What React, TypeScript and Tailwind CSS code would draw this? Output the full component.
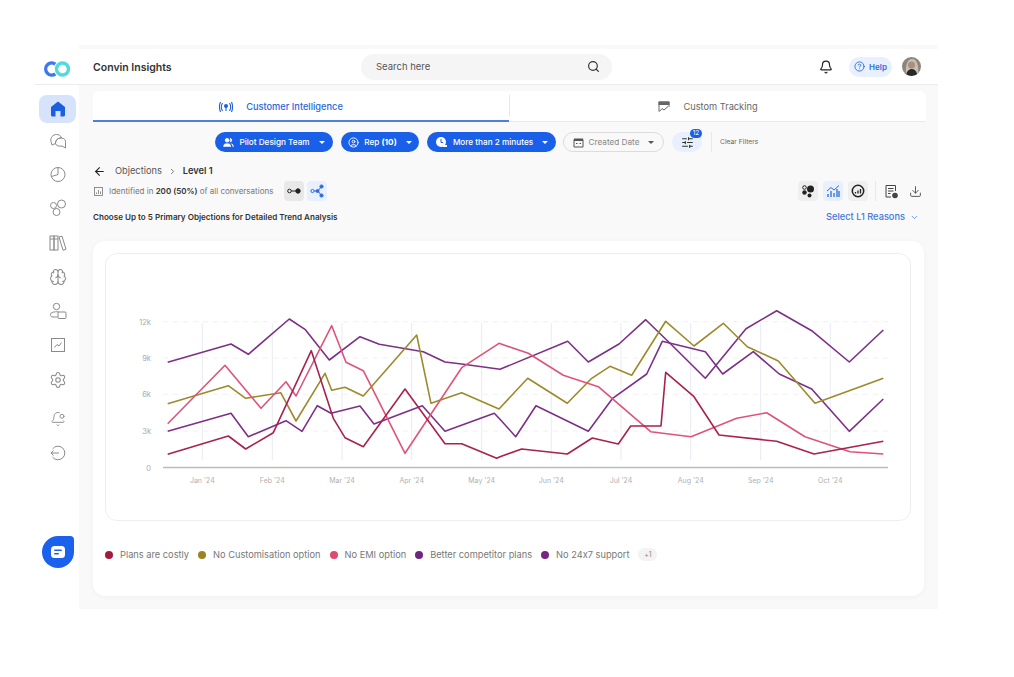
import React from 'react';
import { Bell, Brain, ChevronDown, ChevronRight, ArrowLeft, CircleHelp, Search, Settings, BellDot, Download, Users, CircleUser, SlidersHorizontal } from 'lucide-react';

const FONT = 'font-["Inter",sans-serif]';

const series = [
  { color: '#7c3086', pts: '167.7,362.3 231,344 248.3,354.3 289.3,319 305,329.3 329.3,360 360,336.7 379.3,344.3 423.3,351.7 445,362 461.7,364 500,369.3 567.7,341.3 588.3,362 619,344 645.7,319.7 670,343.3 705.3,378.3 746,328.7 776.7,310.7 811.7,330.7 849.3,362 883.3,330' },
  { color: '#7c3086', pts: '167.7,431.3 231,413.3 248.3,436.7 286,420.7 302,431.3 317.3,405.7 331,413.3 360,406 374,424 422.3,405.7 445,431.3 494.3,413.3 500,419.3 515.7,436.7 536,405.7 588.3,431.3 612.3,398.7 646.7,374 662.3,341.3 705.3,351.7 722.7,374 753.3,351.7 779.3,374 811.7,389 849.3,431.3 883.3,399' },
  { color: '#9c8a2c', pts: '167.7,403.7 228.3,385.7 245.7,398.3 280.7,392.7 296,421 325,373.3 331.7,390.3 345,387.3 363.3,396 416.7,335 431,403.3 461.7,392.7 499,409 527.7,378.3 567.3,403.3 591.7,378.3 610,366.3 631.7,375.3 665.7,321.3 694,346 723.3,323.3 747.3,346.7 778.3,361 815,403.3 883.3,378.3' },
  { color: '#de5479', pts: '167.7,423.7 225,365.3 261,408.3 286,381.7 296,396 331.7,325.7 346,362.3 363.3,370.7 405,453.3 461.7,367.7 499,343.3 528.3,353.3 563.3,375.3 598.3,386.7 650.7,431.7 691,436.7 736.7,418.3 766.7,412.7 805,436.7 850,451.7 883.3,454' },
  { color: '#a8224e', pts: '167.7,454.3 228.3,436 245.7,449 273.3,432.7 311.3,350.7 333.3,418.3 345,437.7 363.3,446.7 405,389 445,443.7 461.7,443.7 496.7,458.3 500,456.7 521.7,449 567.3,454 592.3,438 618.3,444 630.7,426 661,426 665.7,372.3 694,396.7 719,435 776.7,441.3 814,454 883.3,441.3' },
];

const yTicks = [
  { label: '12k', y: 321.7 },
  { label: '9k', y: 358 },
  { label: '6k', y: 394.3 },
  { label: '3k', y: 431 },
];

const months = [
  { label: "Jan '24", x: 202.3 },
  { label: "Feb '24", x: 272.3 },
  { label: "Mar '24", x: 342 },
  { label: "Apr '24", x: 411.7 },
  { label: "May '24", x: 481.7 },
  { label: "Jun '24", x: 551.3 },
  { label: "Jul '24", x: 621 },
  { label: "Aug '24", x: 690.7 },
  { label: "Sep '24", x: 760.7 },
  { label: "Oct '24", x: 830.3 },
];

const legend = [
  { label: 'Plans are costly', dot: 'bg-[#a5183f]' },
  { label: 'No Customisation option', dot: 'bg-[#9a8420]' },
  { label: 'No EMI option', dot: 'bg-[#e04a70]' },
  { label: 'Better competitor plans', dot: 'bg-[#6f2480]' },
  { label: 'No 24x7 support', dot: 'bg-[#7a2482]' },
];

const Logo = () => (
  <svg width="27" height="16" viewBox="0 0 27 16">
    <path d="M11.3 3.2A6 6 0 1 0 11.3 12.8" fill="none" stroke="#3f78ee" strokeWidth="3.4" />
    <circle cx="18.5" cy="8" r="6" fill="none" stroke="#4fdadb" strokeWidth="3.4" />
  </svg>
);

const HomeIcon = () => (
  <svg width="18" height="18" viewBox="0 0 18 18">
    <path fillRule="evenodd" d="M9 1.5 16 7v8a1.5 1.5 0 0 1-1.5 1.5h-11A1.5 1.5 0 0 1 2 15V7ZM6.5 11v5.5h5V11Z" fill="#1a5fe0" />
  </svg>
);

const ChatsIcon = () => (
  <svg width="18" height="18" viewBox="0 0 18 18" fill="none" stroke="#8a8a8a" strokeWidth="1">
    <path d="M2 9.5C1 5.5 4 2.5 7.500 2.500 10 2.500 12 3.800 12.500 6 9 5.800 6.500 8 6.500 11.500L3 13Z" />
    <path d="M6.500 11.500C6.500 8 9 5.800 12.500 6 15 6.200 17 8 16.500 10.500L16.500 16 13 14C10 14.500 7 14 6.500 11.500Z" />
  </svg>
);

const PieIcon = () => (
  <svg width="18" height="18" viewBox="0 0 18 18" fill="none" stroke="#8a8a8a" strokeWidth="1">
    <circle cx="9" cy="9.500" r="7" />
    <path d="M9 2.500V9.500L2.500 11.500" />
  </svg>
);

const BubblesIcon = () => (
  <svg width="18" height="18" viewBox="0 0 18 18" fill="none" stroke="#8a8a8a" strokeWidth="1">
    <circle cx="4.500" cy="6.500" r="3" />
    <circle cx="12.500" cy="5" r="4" />
    <circle cx="7.500" cy="13" r="3.500" />
  </svg>
);

const BooksIcon = () => (
  <svg width="18" height="18" viewBox="0 0 18 18" fill="none" stroke="#8a8a8a" strokeWidth="1">
    <rect x="1" y="2" width="4" height="14" />
    <rect x="5" y="2" width="4" height="14" />
    <path d="M1 5H9M10 3l3-.8 4 13-3 1Z" />
  </svg>
);

const PersonCaseIcon = () => (
  <svg width="18" height="18" viewBox="0 0 18 18" fill="none" stroke="#8a8a8a" strokeWidth="1">
    <circle cx="7.500" cy="4.500" r="3.200" />
    <path d="M8.500 15H4C1 15 .6 11.500 3 10.500 5 9.800 8 9.500 10 10" />
    <rect x="9" y="10" width="8" height="6.500" rx="1" />
  </svg>
);

const TrendBoxIcon = () => (
  <svg width="16" height="16" viewBox="0 0 16 16" fill="none" stroke="#8a8a8a" strokeWidth="1">
    <rect x="1.500" y="1.500" width="13" height="13" />
    <path d="M4.500 10.500 7 7.500 9 9 11.500 5.500" />
  </svg>
);

const ExitIcon = () => (
  <svg width="18" height="18" viewBox="0 0 18 18" fill="none" stroke="#8a8a8a" strokeWidth="1">
    <path d="M3.500 5A6.800 6.800 0 1 1 3.500 13" />
    <path d="M10 9H2M4.500 6.500 2 9l2.500 2.500" />
  </svg>
);

const ChatButton = () => (
  <div className="flex h-8 w-8 items-center justify-center rounded-[50%_12%_50%_50%] bg-[#1a62ee]">
    <svg width="16" height="14" viewBox="0 0 16 14">
      <rect x="1" y="1" width="14" height="12" rx="3.500" fill="#fff" />
      <rect x="4" y="4.500" width="8" height="1.600" rx=".8" fill="#1a62ee" />
      <rect x="4" y="8" width="5" height="1.600" rx=".8" fill="#1a62ee" />
    </svg>
  </div>
);

const Avatar = () => (
  <svg width="19" height="19" viewBox="0 0 19 19" className="rounded-full">
    <rect width="19" height="19" fill="#8d857c" />
    <path d="M4 19C3 9 5 2 10 2s7 6 6 17Z" fill="#c9bfb2" />
    <circle cx="9.500" cy="8" r="3.500" fill="#a98f7d" />
    <path d="M4 19c.5-5 3-7 6-7s5 3 5.500 7Z" fill="#26282b" />
  </svg>
);

const BroadcastIcon = () => (
  <svg width="14" height="14" viewBox="0 0 14 14" fill="none" stroke="#1d5fe0" strokeWidth="1.100">
    <path d="M3.500 3C2 5.500 2 8.500 3.500 11M10.500 3C12 5.500 12 8.500 10.500 11" />
    <path d="M1.500 2C.2 5 .2 9 1.500 12M12.500 2C13.800 5 13.800 9 12.500 12" />
    <circle cx="7" cy="6" r="2" fill="#1d5fe0" stroke="none" />
    <path d="M7 7v4" />
  </svg>
);

const CustomTrackIcon = () => (
  <svg width="12" height="12" viewBox="0 0 12 12" fill="none" stroke="#666" strokeWidth="1">
    <path d="M1 10.500V1h10v5" />
    <rect x="1" y="1" width="10" height="2.500" fill="#666" />
    <path d="M1.500 10.500 4 7.500 6 9l4-3.500" />
  </svg>
);

const ClockPersonIcon = () => (
  <svg width="13" height="13" viewBox="0 0 13 13">
    <circle cx="6" cy="6" r="5" fill="#fff" />
    <path d="M6 3v3.500h2" stroke="#1a5fe8" fill="none" strokeWidth="1" />
    <rect x="7.500" y="9" width="4.500" height="2" fill="#fff" />
  </svg>
);

const CalendarIcon = () => (
  <svg width="11" height="11" viewBox="0 0 11 11">
    <path d="M1 2.500h9V10H1Z" fill="none" stroke="#555" strokeWidth="1" />
    <rect x="1" y="1.500" width="9" height="2.500" fill="#555" />
    <rect x="3" y="6" width="1.500" height="1" fill="#555" />
    <rect x="6.500" y="6" width="1.500" height="1" fill="#555" />
  </svg>
);

const Caret = ({ className }: { className: string }) => (
  <span className={`ml-[9px] h-0 w-0 border-x-[3px] border-t-[3px] border-x-transparent ${className}`} />
);

const ReportIcon = () => (
  <svg width="15" height="15" viewBox="0 0 15 15" fill="none" stroke="#444" strokeWidth="1">
    <path d="M7 13H2V1.500h9.500V7" />
    <path d="M4 4.500h5.500M4 7h5.500M4 9.500h2.500" />
    <circle cx="11" cy="11.500" r="2.800" fill="#444" stroke="none" />
  </svg>
);

const ClusterIcon = () => (
  <svg width="13" height="13" viewBox="0 0 13 13" fill="#222">
    <circle cx="8.500" cy="4" r="3.500" />
    <circle cx="2.500" cy="2.500" r="1.800" fill="none" stroke="#222" strokeWidth="1" />
    <circle cx="2.500" cy="7.500" r="2.200" />
    <circle cx="7.500" cy="10.500" r="2" />
  </svg>
);

const BarsTrendIcon = () => (
  <svg width="14" height="14" viewBox="0 0 14 14" fill="none" stroke="#2d6be2" strokeWidth="1">
    <path d="M1 7 5 3.500 8 6 13 1.500" />
    <path d="M2 13v-3M5 13V7M8 13V9M11 13V5M13 13V7" strokeWidth="1.300" />
  </svg>
);

const GaugeIcon = () => (
  <svg width="14" height="14" viewBox="0 0 14 14">
    <circle cx="7" cy="7" r="5.700" fill="none" stroke="#222" strokeWidth="1.500" />
    <path d="M4.500 9.500V8M7 9.500v-3M9.500 9.500V5" stroke="#222" strokeWidth="1.300" />
  </svg>
);

const App: React.FC = () => {
  return (
    <div className={`h-[677px] w-[1014px] overflow-hidden bg-white ${FONT}`}>
      <div className="flex w-[938px] pl-[35px] pt-[45px]">
        {/* sidebar */}
        <div className="flex w-11 flex-col">
          <div className="flex h-[40px] items-end justify-center border-b border-[#ececec] pb-[7px]">
            <Logo />
          </div>
          <div className="ml-1 flex w-[37px] flex-col items-center pt-[10px]">
            <div className="flex h-7 w-[37px] items-center justify-center rounded-lg bg-[#d6e3fb]"><HomeIcon /></div>
            <div className="mt-2 flex h-5 items-center"><ChatsIcon /></div>
            <div className="mt-[13px] flex h-5 items-center"><PieIcon /></div>
            <div className="mt-[14px] flex h-5 items-center"><BubblesIcon /></div>
            <div className="mt-[15px] flex h-5 items-center"><BooksIcon /></div>
            <div className="mt-[14px] flex h-5 items-center"><Brain size={18} strokeWidth={1.4} color="#8a8a8a" /></div>
            <div className="mt-[14px] flex h-5 items-center"><PersonCaseIcon /></div>
            <div className="mt-[14px] flex h-5 items-center"><TrendBoxIcon /></div>
            <div className="mt-[15px] flex h-5 items-center"><Settings size={18} strokeWidth={1.4} color="#8a8a8a" /></div>
            <div className="mt-[19px] flex h-5 items-center"><BellDot size={16} strokeWidth={1.4} color="#8a8a8a" /></div>
            <div className="mt-[14px] flex h-5 items-center"><ExitIcon /></div>
            <div className="mt-[73px]"><ChatButton /></div>
          </div>
        </div>

        {/* main */}
        <div className="flex h-[564px] flex-1 flex-col bg-[#f9f9f9]">
          <div className="mt-1 flex h-[36px] items-center border-b border-[#ececec] bg-white pl-[14px] pr-[17px]">
            <div className="w-[268px] pt-[2px] text-[10.5px] font-semibold text-[#333]">Convin Insights</div>
            <div className="flex h-[26px] w-[251px] items-center justify-between rounded-full bg-[#f5f5f5] pl-[15px] pr-[12px]">
              <span className="pt-[2px] text-[9.5px] text-[#555]">Search here</span>
              <Search size={13} color="#333" strokeWidth={2.2} />
            </div>
            <div className="ml-auto flex items-center">
              <Bell size={14} color="#222" />
              <div className="ml-[16px] flex h-5 w-[43px] items-center justify-center gap-1 rounded-full bg-[#e8f0fd] text-[8px] font-semibold text-[#2d6be2]">
                <CircleHelp size={11} />
                Help
              </div>
              <div className="ml-[10px] h-[19px] w-[19px]"><Avatar /></div>
            </div>
          </div>

          <div className="pl-[14px] pr-[12px]">
            {/* tabs */}
            <div className="mt-[6px] flex h-[31px] rounded-t-md border-b border-[#eaeaea] bg-white">
              <div className="-mb-px flex w-[416px] items-center justify-center gap-[13px] border-b-2 border-[#4d7fe0] pr-[40px] pt-[2px] text-[9.25px] font-medium text-[#2a66dc]">
                <BroadcastIcon />
                Customer Intelligence
              </div>
              <div className="my-1 w-px bg-[#e8e8e8]" />
              <div className="flex flex-1 items-center justify-center gap-[13px] pr-[20px] pt-[2px] text-[9.25px] text-[#666]">
                <CustomTrackIcon />
                Custom Tracking
              </div>
            </div>

            {/* filters */}
            <div className="mt-[10px] flex h-5 items-center pl-[122px] text-[8.2px]">
              <div className="flex h-5 w-[118px] items-center justify-center rounded-full bg-[#1a5fe8] font-medium text-white">
                <Users size={11} fill="#fff" />
                <span className="ml-[5px]">Pilot Design Team</span>
                <Caret className="border-t-white" />
              </div>
              <div className="ml-2 flex h-5 w-[78px] items-center justify-center rounded-full bg-[#1a5fe8] font-medium text-white">
                <CircleUser size={11} />
                <span className="ml-[5px]">Rep <b>(10)</b></span>
                <Caret className="border-t-white" />
              </div>
              <div className="ml-2 flex h-5 w-[129px] items-center justify-center rounded-full bg-[#1a5fe8] font-medium text-white">
                <ClockPersonIcon />
                <span className="ml-[5px]">More than 2 minutes</span>
                <Caret className="border-t-white" />
              </div>
              <div className="ml-[7px] flex h-5 w-[101px] items-center justify-center rounded-full border border-[#dcdcdc] text-[#888]">
                <CalendarIcon />
                <span className="ml-[5px]">Created Date</span>
                <Caret className="border-t-[#555]" />
              </div>
              <div className="relative ml-2 flex h-5 w-[30px] items-center justify-center rounded-full bg-[#e8f0fd]">
                <SlidersHorizontal size={13} color="#333" />
                <span className="absolute -top-[3px] right-0 flex h-[9px] w-3 items-center justify-center rounded-full bg-[#1a5fe8] text-[6.5px] text-white">12</span>
              </div>
              <div className="ml-[9px] h-5 w-px bg-[#e8e8e8]" />
              <span className="ml-2 text-[6.75px] text-[#666]">Clear Filters</span>
            </div>

            {/* breadcrumb */}
            <div className="mt-[13px] flex h-[12px] items-center text-[9.25px] text-[#555]">
              <ArrowLeft size={13} color="#222" />
              <span className="ml-[9px]">Objections</span>
              <ChevronRight size={9} className="ml-[6px]" />
              <span className="ml-[6px] font-semibold text-[#333]">Level 1</span>
            </div>

            {/* info row */}
            <div className="mt-1 flex h-5 items-center text-[8px] text-[#777]">
              <svg width="9" height="9" viewBox="0 0 9 9" fill="none" stroke="#777" strokeWidth=".8" className="ml-px">
                <rect x=".5" y=".5" width="8" height="8" />
                <path d="M2.500 7V5.500M4.500 7V3M6.500 7V4.500" />
              </svg>
              <span className="ml-[6px]">Identified in <b className="font-semibold text-[#333]">200 (50%)</b> of all conversations</span>
              <div className="ml-[11px] flex h-5 w-5 items-center justify-center rounded bg-[#e8e8e8]">
                <svg width="14" height="6" viewBox="0 0 14 6" fill="none" stroke="#222" strokeWidth="1">
                  <circle cx="2.500" cy="3" r="1.800" />
                  <path d="M4.500 3h5" />
                  <circle cx="11" cy="3" r="2.200" fill="#222" />
                </svg>
              </div>
              <div className="ml-[3px] flex h-5 w-5 items-center justify-center rounded bg-[#e8f0fd]">
                <svg width="14" height="14" viewBox="0 0 14 14" fill="none" stroke="#2d6be2" strokeWidth="1">
                  <circle cx="2.500" cy="7" r="1.600" />
                  <path d="M4 7h4M8 7l3-4M8 7l3 4" />
                  <circle cx="11.500" cy="2.500" r="1.600" fill="#2d6be2" />
                  <circle cx="7.500" cy="7" r="1.500" fill="#2d6be2" />
                  <circle cx="11.500" cy="11.500" r="1.600" fill="#2d6be2" />
                </svg>
              </div>
              <div className="ml-auto flex items-center">
                <div className="flex h-5 w-5 items-center justify-center rounded bg-[#efefef]"><ClusterIcon /></div>
                <div className="ml-[5px] flex h-5 w-5 items-center justify-center rounded bg-[#e8f0fd]"><BarsTrendIcon /></div>
                <div className="ml-[5px] flex h-5 w-5 items-center justify-center rounded bg-[#efefef]"><GaugeIcon /></div>
                <div className="ml-[7px] h-5 w-px bg-[#e8e8e8]" />
                <div className="ml-2"><ReportIcon /></div>
                <Download size={13} color="#444" strokeWidth={1.6} className="ml-[10px] mr-[4px]" />
              </div>
            </div>

            {/* heading */}
            <div className="mt-[10px] flex h-[12px] items-center justify-between">
              <span className="text-[8.1px] font-semibold text-[#333]">Choose Up to 5 Primary Objections for Detailed Trend Analysis</span>
              <span className="mr-[7px] flex items-center gap-[5px] text-[9.25px] font-medium text-[#3f78dc]">
                Select L1 Reasons
                <ChevronDown size={9} />
              </span>
            </div>

            {/* chart card */}
            <div className="mt-[18px] flex h-[355px] w-[831px] flex-col rounded-xl bg-white p-3 shadow-[0_1px_6px_rgba(0,0,0,0.04)]">
              <div className="h-[268px] w-[806px] rounded-xl border border-[#eeeeee]">
                <svg viewBox="106 254 804 266" className="block h-[266px] w-[804px]">
                  {months.map((m) => (
                    <line key={m.x} x1={m.x} x2={m.x} y1="323" y2="460" stroke="#e9ebf3" strokeWidth="1" />
                  ))}
                  {yTicks.map((t) => (
                    <line key={t.y} x1="163" x2="888" y1={t.y} y2={t.y} stroke="#f0f0f0" strokeWidth="1" strokeDasharray="5 5" />
                  ))}
                  <line x1="163" x2="888" y1="467.500" y2="467.500" stroke="#bbbbbb" strokeWidth="1.400" />
                  {yTicks.map((t) => (
                    <text key={t.label} x="151" y={t.y + 3} textAnchor="end" fontSize="7.500" fill="#aaa">{t.label}</text>
                  ))}
                  <text x="151" y="471" textAnchor="end" fontSize="7.500" fill="#aaa">0</text>
                  {months.map((m) => (
                    <text key={m.label} x={m.x} y="483" textAnchor="middle" fontSize="7" fill="#b0b0b0">{m.label}</text>
                  ))}
                  {series.map((s, i) => (
                    <polyline key={i} points={s.pts} fill="none" stroke={s.color} strokeWidth="1.600" strokeLinejoin="round" />
                  ))}
                </svg>
              </div>

              {/* legend */}
              <div className='mt-[27px] flex items-center text-[9.25px] text-[#777] [font-feature-settings:"calt"_0]'>
                {legend.map((l) => (
                  <div key={l.label} className="mr-[9px] flex items-center">
                    <span className={`h-2 w-2 rounded-full ${l.dot}`} />
                    <span className="ml-[7px]">{l.label}</span>
                  </div>
                ))}
                <span className="flex h-[13px] w-[19px] items-center justify-center rounded-full bg-[#f3f3f3] text-[7px] text-[#888]">+1</span>
              </div>
            </div>
          </div>
        </div>
      </div>
    </div>
  );
};

export default App;
